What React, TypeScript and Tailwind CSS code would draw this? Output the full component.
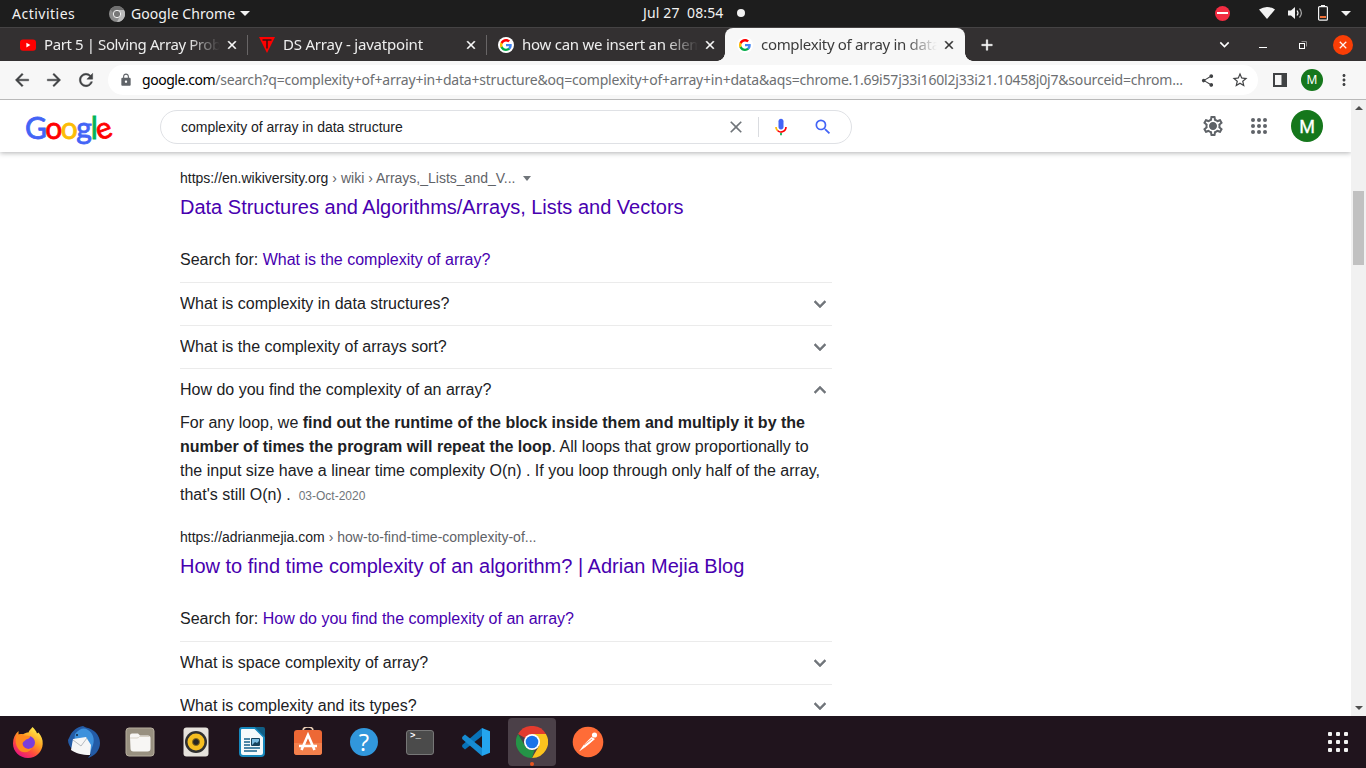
import type { ReactNode } from "react";
import {
  MdArrowBack, MdArrowForward, MdRefresh, MdLock, MdShare, MdStarBorder, MdExpandMore, MdExpandLess,
  MdClose, MdSearch, MdAdd, MdMoreVert, MdOutlineSettings,
} from "react-icons/md";

function GoogleG({ className }: { className: string }) {
  return (
    <svg viewBox="0 0 48 48" className={className}>
      <path fill="#4285f4" d="M47 24.500c0-1.600-.2-3.200-.4-4.700H24v9h12.900c-.6 3-2.300 5.500-4.800 7.200v6h7.700C44.400 37.800 47 31.700 47 24.500z" />
      <path fill="#00ac47" d="M24 48c6.500 0 11.900-2.100 15.900-5.800l-7.700-6c-2.200 1.400-4.900 2.300-8.200 2.300-6.300 0-11.600-4.200-13.500-9.900h-8v6.200C6.500 42.600 14.600 48 24 48z" />
      <path fill="#ffba00" d="M10.500 28.600a14.500 14.500 0 0 1 0-9.200v-6.200h-8a24 24 0 0 0 0 21.600z" />
      <path fill="#f00" d="M24 9.500c3.500 0 6.700 1.200 9.200 3.600l6.800-6.800C35.900 2.400 30.500 0 24 0 14.600 0 6.500 5.400 2.500 13.200l8 6.200C12.400 13.700 17.700 9.500 24 9.500z" />
    </svg>
  );
}

function YouTubeIcon() {
  return (
    <svg viewBox="0 0 16 16" className="size-4">
      <rect y="2.400" width="16" height="11.400" rx="3" fill="#f00" />
      <path d="M6.400 5.800v4.600l4-2.300z" fill="#fff" />
    </svg>
  );
}

function JavatpointIcon() {
  return (
    <svg viewBox="0 0 16 16" className="size-4">
      <path d="M0 0h16L8 16z" fill="#f00" />
      <path d="M3.500 3h9M8 3v8.500" stroke="#3b1010" strokeWidth="1.500" />
    </svg>
  );
}

function TabItem({ icon, title, divider, tracking }: { icon: ReactNode; title: string; divider?: boolean; tracking: string }) {
  return (
    <div className="flex h-[33px] w-[239px] items-center pl-3">
      <span className="flex size-4 items-center justify-center">{icon}</span>
      <span className="mb-[2px] ml-2 h-6 w-[176px] overflow-hidden whitespace-nowrap text-[15px] leading-6 text-[#eeeeee] [mask-image:linear-gradient(to_right,black_82%,transparent)]">
        <span className={tracking}>{title}</span>
      </span>
      <MdClose className="ml-[5px] size-[14px] text-white [&>path:last-child]:stroke-[0.8]" />
      {divider && <span className="-mr-px ml-2 h-5 w-px bg-[#686566]" />}
    </div>
  );
}

function TopBar() {
  return (
    <div className="flex h-[27px] shrink-0 items-center bg-[#1d1d1d] text-[14px] text-[#f2f2f2]">
      <span className="w-[109px] pl-3 tracking-[0.500px]">Activities</span>
      <svg viewBox="0 0 16 16" className="size-4">
        <circle cx="8" cy="8" r="8" fill="#8b8b8b" />
        <path d="M8 0a8 8 0 0 1 7 4H8L5 8 1.500 3.500A8 8 0 0 1 8 0z" fill="#707070" />
        <path d="M8 4h7a8 8 0 0 1-7 12l3-6z" fill="#b9b9b9" />
        <circle cx="8" cy="8" r="3.700" fill="#777" stroke="#f3f3f3" strokeWidth="1" />
      </svg>
      <span className="ml-[6px] w-[104px] whitespace-nowrap tracking-[0.060px]">Google Chrome</span>
      <svg viewBox="0 0 10 5" className="ml-[5px] h-[5px] w-[10px]"><path d="M0 0h10L5 5z" fill="#f2f2f2" /></svg>
      <span className="mb-[2px] ml-[393px] w-[82px] whitespace-pre tracking-[0.130px]">Jul 27  08:54</span>
      <span className="mb-px ml-3 size-2 rounded-full bg-[#f2f2f2]" />
      <div className="mb-px ml-auto flex items-center pr-[15px]">
        <span className="flex size-[15px] items-center justify-center rounded-full bg-[#f22c42]"><span className="h-[2px] w-[11px] bg-white" /></span>
        <svg viewBox="0 0 16 12" className="ml-[29px] h-3 w-4"><path d="M0 2.500Q8-2.500 16 2.500L8 12z" fill="#f2f2f2" /></svg>
        <svg viewBox="0 0 16 14" className="ml-[13px] h-[14px] w-4" fill="none" stroke="#f2f2f2" strokeWidth="1.200">
          <path d="M0 4.500h3L7 1v12L3 9.500H0z" fill="#f2f2f2" stroke="none" />
          <path d="M9 4.500q2 2.500 0 5" />
          <path d="M11.500 2.500q3.800 4.500 0 9" stroke="#aaa" />
        </svg>
        <svg viewBox="0 0 10 16" className="ml-[14px] h-4 w-[10px]">
          <path d="M3 0h4v2H3z" fill="#f2f2f2" />
          <rect x=".6" y="1.600" width="8.800" height="13.600" rx="1" fill="none" stroke="#f2f2f2" strokeWidth="1.200" />
          <path d="M2 11h6v2H2z" fill="#ee6f36" />
        </svg>
        <svg viewBox="0 0 10 5" className="ml-[13px] h-[5px] w-[10px]"><path d="M0 0h10L5 5z" fill="#f2f2f2" /></svg>
      </div>
    </div>
  );
}

function TabStrip() {
  return (
    <div className="flex h-[34px] shrink-0 border-t border-[#454344] bg-[#333031] pl-2">
      <TabItem icon={<YouTubeIcon />} title="Part 5 | Solving Array Problems" tracking="tracking-[-0.400px]" divider />
      <TabItem icon={<JavatpointIcon />} title="DS Array - javatpoint" tracking="tracking-[-0.200px]" divider />
      <TabItem
        icon={<span className="flex size-4 shrink-0 items-center justify-center rounded-full bg-white"><GoogleG className="size-3" /></span>}
        title="how can we insert an element"
        tracking="tracking-[-0.250px]"
      />
      <div className="relative flex h-[33px] w-[240px] items-center rounded-t-lg bg-[#f7f7f7] pl-3">
        <span className="absolute bottom-0 -left-2 size-2 bg-[radial-gradient(circle_at_top_left,#333031_7.500px,#f7f7f7_8px)]" />
        <span className="absolute -right-2 bottom-0 size-2 bg-[radial-gradient(circle_at_top_right,#333031_7.500px,#f7f7f7_8px)]" />
        <span className="flex size-4 items-center justify-center rounded-full bg-white"><GoogleG className="size-3" /></span>
        <span className="mb-[2px] ml-2 h-6 w-[176px] overflow-hidden whitespace-nowrap text-[15px] leading-6 tracking-[-0.320px] text-[#3c3c3c] [mask-image:linear-gradient(to_right,black_82%,transparent)]">
          complexity of array in data structure
        </span>
        <MdClose className="ml-[5px] size-[14px] text-[#333] [&>path:last-child]:stroke-[0.8]" />
      </div>
      <div className="flex flex-1 items-center">
        <MdAdd className="ml-[13px] size-[18px] text-white [&>path:last-child]:stroke-[0.6]" />
        <MdExpandMore className="ml-auto size-[19px] text-white" />
        <span className="mt-[5px] ml-[25px] h-px w-2 bg-white" />
        <svg viewBox="0 0 8 8" className="ml-8 size-2" fill="none">
          <path d="M2.500.5h5v5" stroke="#8d8b8b" />
          <rect x=".5" y="2.500" width="5" height="5" stroke="#fff" />
        </svg>
        <span className="mr-[13px] ml-[26px] flex size-5 items-center justify-center rounded-full bg-[#f93e06]">
          <MdClose className="size-3 text-white [&>path:last-child]:stroke-[0.6]" />
        </span>
      </div>
    </div>
  );
}

function Toolbar() {
  return (
    <div className="flex h-[39px] shrink-0 items-center border-b border-[#b9b9b9] bg-[#f7f7f7] text-[#404244]">
      <MdArrowBack className="ml-3 size-5 [&>path:last-child]:stroke-[0.5]" />
      <MdArrowForward className="ml-3 size-5 [&>path:last-child]:stroke-[0.5]" />
      <MdRefresh className="ml-3 size-5 [&>path:last-child]:stroke-[0.5]" />
      <div className="ml-3 flex h-[30px] w-[1150px] items-center rounded-full bg-white">
        <MdLock className="ml-[11px] size-[14px] text-[#5f6368]" />
        <span className="mb-[2px] ml-[9px] w-[1043px] whitespace-nowrap text-[14px] tracking-[-0.200px] text-[#6d6f72]">
          <span className="tracking-[-0.450px] text-black">google.com</span>/search?q=complexity+of+array+in+data+structure&amp;oq=complexity+of+array+in+data&amp;aqs=chrome.1.69i57j33i160l2j33i21.10458j0j7&amp;sourceid=chrom...
        </span>
        <MdShare className="ml-[15px] size-[15px]" />
        <MdStarBorder className="ml-4 size-[18px]" />
      </div>
      <svg viewBox="0 0 14 14" className="ml-[15px] size-[14px]"><path d="M0 0h14v14H0zM2 2v10h6.500V2z" fillRule="evenodd" fill="#404244" /></svg>
      <span className="ml-[14px] flex size-[22px] items-center justify-center rounded-full bg-[#15771c] text-[12px] text-white">M</span>
      <MdMoreVert className="ml-3 size-[18px]" />
    </div>
  );
}

function SearchHeader() {
  return (
    <header className="relative z-10 flex h-[52px] shrink-0 items-center bg-white shadow-[0_1px_5px_rgba(32,33,36,0.35)]">
      <div className="flex h-[52px] w-[160px] items-center pt-px pl-[25px] font-['Lato',sans-serif] text-[30px] leading-[52px] tracking-[-1.600px] [-webkit-text-stroke:0.800px_currentColor]">
        <span className="text-[#4364f6]">G</span>
        <span className="text-[#f00]">o</span>
        <span className="text-[#fcbc05]">o</span>
        <span className="text-[#4364f6]">g</span>
        <span className="ml-[0.500px] text-[#00b45a]">l</span>
        <span className="ml-[0.500px] h-[52px] origin-[45%_62%] -rotate-[20deg] text-[#f00]">e</span>
      </div>
      <div className="mt-[2px] flex h-[34px] w-[692px] items-center rounded-full border border-[#dfe1e5] pl-5">
        <span className="w-[545px] text-[14px] text-[#202124]">complexity of array in data structure</span>
        <MdClose className="size-5 shrink-0 text-[#70757a]" />
        <span className="ml-[12px] h-5 w-px bg-[#dadce0]" />
        <svg viewBox="0 0 24 24" className="ml-[12px] size-5">
          <path fill="#4364f6" d="M12 15c1.700 0 3-1.300 3-3V5c0-1.700-1.300-3-3-3S9 3.300 9 5v7c0 1.700 1.300 3 3 3z" />
          <path fill="#00ac47" d="M11 18.900h2V22h-2z" />
          <path fill="#fcbc05" d="M7 12H5c0 1.900.8 3.700 2.100 4.900l1.400-1.400A5 5 0 0 1 7 12z" />
          <path fill="#f00" d="M12 17c-1.400 0-2.600-.6-3.500-1.500l-1.400 1.400A7 7 0 0 0 19 12h-2c0 2.800-2.200 5-5 5z" />
        </svg>
        <MdSearch className="ml-[22px] size-5 text-[#4364f6]" />
      </div>
      <svg viewBox="0 0 24 24" className="ml-[349px] size-6">
        <MdOutlineSettings className="text-[#5f6368]" size={24} />
        <circle cx="12" cy="12" r="3.300" fill="#5f6368" />
      </svg>
      <svg viewBox="0 0 16 16" className="ml-[26px] size-4" fill="#5f6368">
        {[2, 8, 14].map((y) => [2, 8, 14].map((x) => <circle key={`${x}-${y}`} cx={x} cy={y} r="2" />))}
      </svg>
      <span className="ml-6 flex size-8 items-center justify-center rounded-full bg-[#15771c] pt-px font-['Roboto',sans-serif] text-[18px] text-white [-webkit-text-stroke:0.300px_white]">M</span>
    </header>
  );
}

function Question({ text, open }: { text: string; open?: boolean }) {
  return (
    <div className="flex h-[43px] items-center justify-between border-t border-[#ebebeb]">
      <span>{text}</span>
      {open
        ? <MdExpandLess className="size-6 text-[#70757a] [&>path:last-child]:stroke-[0.5]" />
        : <MdExpandMore className="size-6 text-[#70757a] [&>path:last-child]:stroke-[0.5]" />}
    </div>
  );
}

function Source({ site, path, title, caret }: { site: string; path: string; title: string; caret?: boolean }) {
  return (
    <>
      <div className="flex h-5 items-center text-[14px] leading-5">
        <span>{site}</span>
        <span className="ml-1 text-[#5f6368]">{path}</span>
        {caret && <svg viewBox="0 0 8 5" className="ml-2 h-[5px] w-2"><path d="M0 0h8L4 5z" fill="#70757a" /></svg>}
      </div>
      <h3 className="mt-[6px] text-[20px] leading-[26px] text-[#4800b0]">{title}</h3>
    </>
  );
}

function SearchFor({ query }: { query: string }) {
  return <p className="mt-[30px] mb-3 leading-5">Search for: <span className="text-[#4800b0]">{query}</span></p>;
}

function Results() {
  return (
    <main className="ml-[180px] min-h-0 w-[652px] flex-1 overflow-hidden pt-4 text-[16px] text-[#202124]">
      <Source site="https://en.wikiversity.org" path="› wiki › Arrays,_Lists_and_V..." title="Data Structures and Algorithms/Arrays, Lists and Vectors" caret />
      <SearchFor query="What is the complexity of array?" />
      <Question text="What is complexity in data structures?" />
      <Question text="What is the complexity of arrays sort?" />
      <Question text="How do you find the complexity of an array?" open />
      <p className="mb-[19px] leading-6">
        For any loop, we <b>find out the runtime of the block inside them and multiply it by the number of times the program will repeat the loop</b>. All loops that grow proportionally to the input size have a linear time complexity O(n) . If you loop through only half of the array, that's still O(n) .
        <span className="ml-2 text-[12px] text-[#70757a]">03-Oct-2020</span>
      </p>
      <Source site="https://adrianmejia.com" path="› how-to-find-time-complexity-of..." title="How to find time complexity of an algorithm? | Adrian Mejia Blog" />
      <SearchFor query="How do you find the complexity of an array?" />
      <Question text="What is space complexity of array?" />
      <Question text="What is complexity and its types?" />
    </main>
  );
}

function Firefox() {
  return (
    <svg viewBox="0 0 32 32" className="size-8">
      <defs>
        <linearGradient id="fox" x1=".8" y1=".1" x2=".25" y2=".95">
          <stop offset="0" stopColor="#ffe84a" /><stop offset=".4" stopColor="#ff9a1f" /><stop offset=".7" stopColor="#ff4a3f" /><stop offset="1" stopColor="#e8157f" />
        </linearGradient>
      </defs>
      <path d="M20.500 1c2 2.200 4 4 4.500 6.500l1.500-1c3 3.500 4.500 7 4.200 11.500C30.300 26 24 32 16 32 7.500 32 1 25.500 1 17.500 1 12.500 3 8 6.500 5v3.500c1.500-.7 3-.8 4.500-.3 2-1 3.500-1.700 5.500-1.700C17 4 19 3.500 20.500 1z" fill="url(#fox)" />
      <circle cx="16.500" cy="16.500" r="6.500" fill="#7a3ddb" />
      <path d="M4 11c2-3 5-3.500 8-1.500l6 .5c.5 2-1.500 3-4 3.500-1 1.500-3 2-3.500 4 .5 5 6 7 10 4-3 6-11 6.500-14.500 1C3.500 19 3.300 14.500 4 11z" fill="#ff8a1f" />
    </svg>
  );
}

function Thunderbird() {
  return (
    <svg viewBox="0 0 32 32" className="size-8">
      <path d="M2 10C4 5 9 1 15 0l3 1.500C26 3 32 9 32 17c0 7-5 13-12 15l3-4C9 30 0 22 0 14z" fill="#235ba6" />
      <path d="M7 8c4-5 9-7 13-4 5 3 7 9 5 15l-3 8C12 27 5 19 7 8z" fill="#3e91dc" />
      <path d="M5 13l13-2 5 8-1 10C14 29 7 27 3 24z" fill="#f6f6f6" />
      <path d="M5 14l8 6 6-8" fill="none" stroke="#b6bbc0" />
      <circle cx="9" cy="9" r="1" fill="#13253c" />
    </svg>
  );
}

function FilesIcon() {
  return (
    <svg viewBox="0 0 30 30" className="size-[30px]">
      <rect x="1" y="1" width="28" height="28" rx="3" fill="#989080" stroke="#b6ae9e" />
      <path d="M5 10V8.500Q5 6.500 7 6.500h6l2 2h8q2.500 0 2.500 2.500v10.500q0 3-3 3h-14q-3 0-3-3z" fill="#f7f6f4" />
      <path d="M5 11h7q1.500 0 2.500-1.500h10" fill="none" stroke="#d7d1c6" />
    </svg>
  );
}

function RhythmboxIcon() {
  return (
    <svg viewBox="0 0 26 30" className="h-[30px] w-[26px]">
      <rect x=".5" y=".5" width="25" height="29" rx="3" fill="#e6e2dc" />
      <circle cx="13" cy="15" r="11" fill="#303030" />
      <circle cx="13" cy="15" r="8.500" fill="#f5be20" />
      <circle cx="13" cy="15" r="3.500" fill="#252525" stroke="#8b6e1b" />
    </svg>
  );
}

function WriterIcon() {
  return (
    <svg viewBox="0 0 26 30" className="h-[30px] w-[26px]">
      <path d="M3 1h13l9 9v16q0 3-3 3H4q-3 0-3-3V3q0-2 2-2z" fill="#f5fafc" stroke="#1688bd" strokeWidth="2" />
      <path d="M16 0h8q2 0 2 2v8z" fill="#105e85" />
      <path d="M5 12h6M5 15h6M5 18h6M5 21h16M5 24h13" stroke="#17628b" strokeWidth="1.300" />
      <path d="M12.500 11.500h8v7h-8z" fill="#7bbbe0" stroke="#17425c" />
      <path d="M13 18l3-3 2 1 2-2v4z" fill="#17425c" />
    </svg>
  );
}

function SoftwareIcon() {
  return (
    <svg viewBox="0 0 30 30" className="size-[30px]">
      <path d="M10 8V4q0-4 5-4t5 4v4" fill="none" stroke="#e8ceb6" strokeWidth="1.700" />
      <rect x="1" y="3" width="28" height="25" rx="3" fill="#ed6835" />
      <path d="M1 16h28v9q0 3-3 3H4q-3 0-3-3z" fill="#f4804c" />
      <path d="M8.500 23l6.500-15 6.500 15M6 19h18" fill="none" stroke="#fff" strokeWidth="2.600" />
    </svg>
  );
}

function TerminalIcon() {
  return (
    <span className="flex h-[25px] w-7 rounded-[3px] border border-[#777] bg-[#4b4b4b] pl-[3px] font-['Liberation_Mono',monospace] text-[9px] leading-[11px] font-bold text-white">&gt;_</span>
  );
}

function CodeIcon() {
  return (
    <svg viewBox="0 0 28 28" className="size-7">
      <path d="M20 0l8 3.300v21.400L20 28z" fill="#24a5ef" />
      <path d="M20 0v8L3 21.500.2 19v-2z" fill="#0872b8" />
      <path d="M20 28v-8L3 6.500.2 9v2z" fill="#168bd2" />
    </svg>
  );
}

function ChromeIcon() {
  return (
    <svg viewBox="0 0 32 32" className="size-8">
      <path d="M16 16L2.100 8A16 16 0 0 1 29.900 8z" fill="#e33b2e" />
      <path d="M16 8h13.900A16 16 0 0 1 16 32l7-12z" fill="#fcc31e" />
      <path d="M2.100 8L9 20q3 5 9.500 4L16 32A16 16 0 0 1 2.100 8z" fill="#259447" />
      <circle cx="16" cy="16" r="8" fill="#fff" />
      <circle cx="16" cy="16" r="6.300" fill="#1a73e8" />
    </svg>
  );
}

function PostmanIcon() {
  return (
    <svg viewBox="0 0 32 32" className="size-8">
      <circle cx="16" cy="16" r="15.300" fill="#ff6c37" />
      <circle cx="22.500" cy="9" r="2.600" fill="#fff" />
      <path d="M19.500 11l3.500 2-8 7-8 5.500 5-7z" fill="#fff" />
      <path d="M12 19l8-6M14 21l8-6" stroke="#ff6c37" strokeWidth=".7" />
    </svg>
  );
}

function Dock() {
  const before = [<Firefox />, <Thunderbird />, <FilesIcon />, <RhythmboxIcon />, <WriterIcon />, <SoftwareIcon />];
  return (
    <div className="flex h-[52px] shrink-0 items-center bg-[#20141d]">
      {before.map((icon, i) => <span key={i} className="flex w-14 items-center justify-center">{icon}</span>)}
      <span className="flex w-14 items-center justify-center">
        <span className="flex size-7 items-center justify-center rounded-full bg-[#3197dc] font-['Open_Sans',sans-serif] text-[24px] leading-7 text-white">?</span>
      </span>
      <span className="flex w-14 items-center justify-center"><TerminalIcon /></span>
      <span className="flex w-14 items-center justify-center"><CodeIcon /></span>
      <span className="flex w-14 items-center justify-center">
        <span className="relative flex size-12 items-center justify-center rounded-[4px] bg-[#4b4048]">
          <ChromeIcon />
          <span className="absolute bottom-0 left-[22px] size-1 rounded-full bg-[#e95420]" />
        </span>
      </span>
      <span className="flex w-14 items-center justify-center"><PostmanIcon /></span>
      <span className="mr-[18px] ml-auto grid grid-cols-3 gap-1">
        {Array.from({ length: 9 }, (_, i) => <span key={i} className="size-1 rounded-[1px] bg-[#f2f2f2]" />)}
      </span>
    </div>
  );
}

export default function App() {
  return (
    <div className="flex h-[768px] w-[1366px] flex-col overflow-hidden bg-white font-['Noto_Sans',sans-serif]">
      <TopBar />
      <TabStrip />
      <Toolbar />
      <div className="flex min-h-0 flex-1 font-['Liberation_Sans',Arial,sans-serif]">
        <div className="flex min-w-0 flex-1 flex-col overflow-hidden">
          <SearchHeader />
          <Results />
        </div>
        <div className="flex w-[15px] flex-col items-center bg-[#f1f1f1]">
          <svg viewBox="0 0 8 4" className="mt-[6px] h-1 w-2"><path d="M4 0l4 4H0z" fill="#505050" /></svg>
          <span className="mt-[81px] h-[74px] w-[11px] bg-[#c1c1c1]" />
          <svg viewBox="0 0 8 4" className="mt-auto mb-[6px] h-1 w-2"><path d="M0 0h8L4 4z" fill="#505050" /></svg>
        </div>
      </div>
      <Dock />
    </div>
  );
}
